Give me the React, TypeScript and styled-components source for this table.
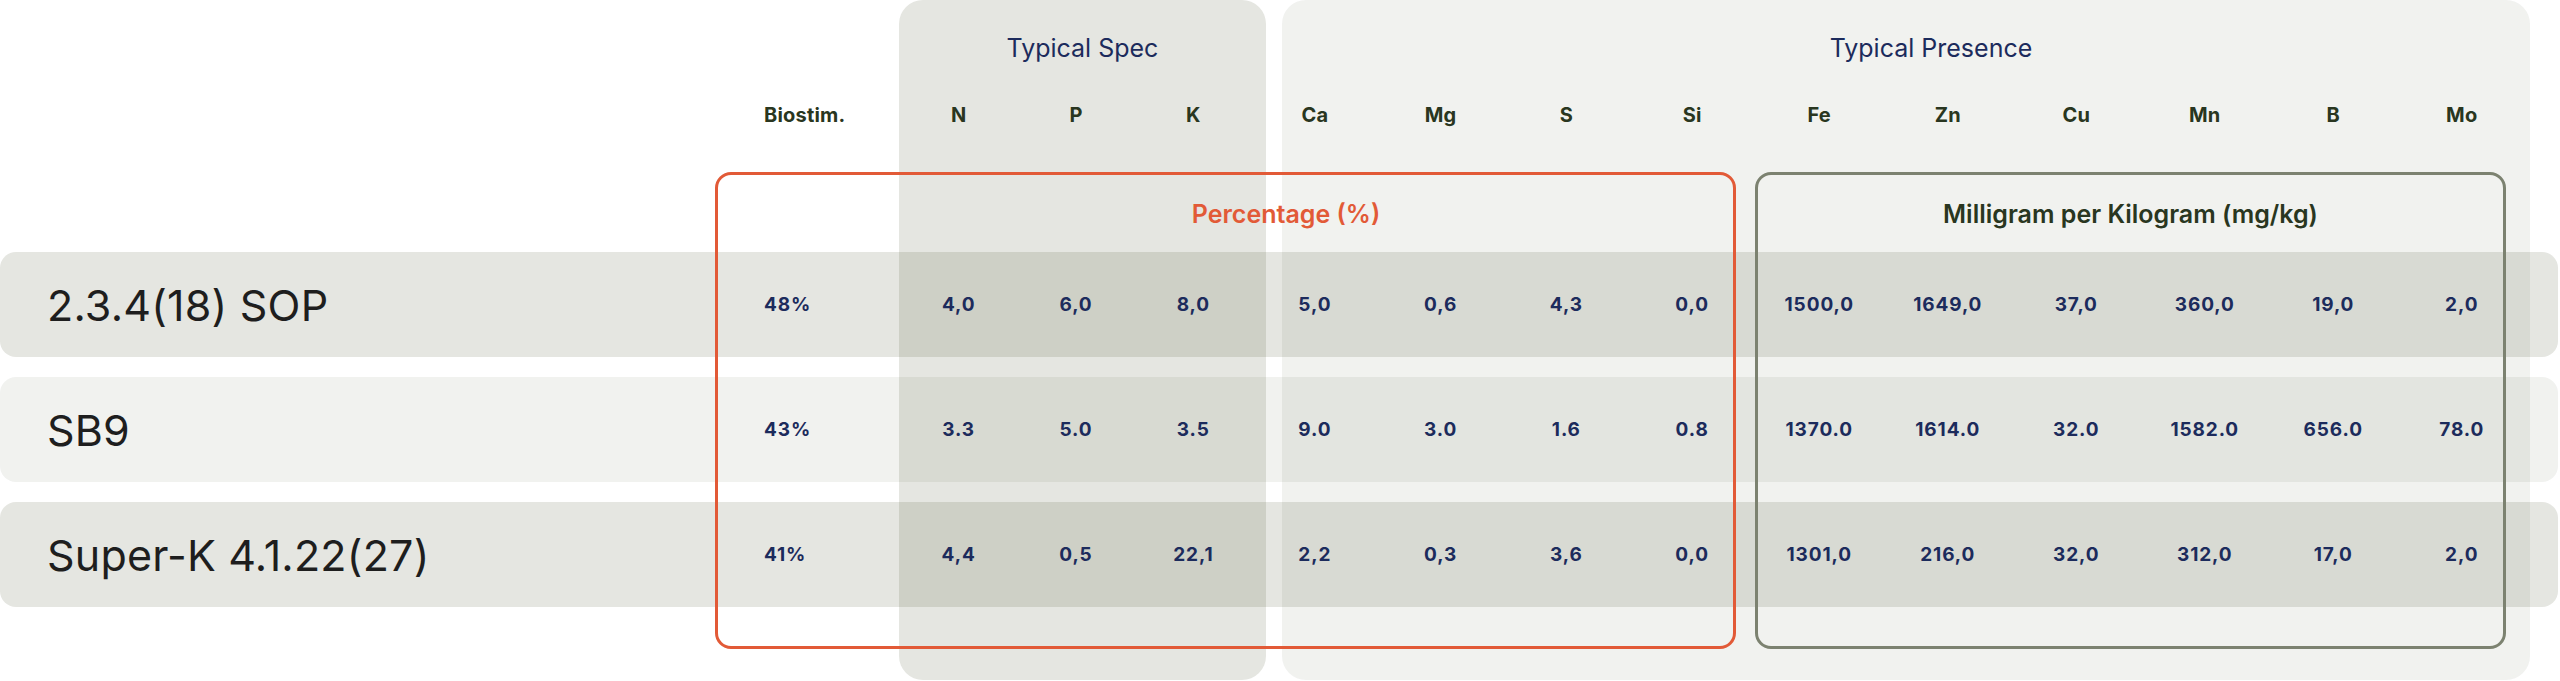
import React from "react";
import styled, { createGlobalStyle } from "styled-components";

const GlobalStyle = createGlobalStyle`
  html, body {
    margin: 0;
    padding: 0;
    background: #ffffff;
  }
  body {
    font-family: Inter, "Noto Sans", Arial, sans-serif;
  }
`;

const NAVY = "#1c2b5c";
const OLIVE_TEXT = "#293620";
const ORANGE = "#e25a37";
const SAGE = "#7c8270";
const TINT = "38, 47, 5";

type Tone = "strong" | "soft";
const alpha = (t: Tone) => (t === "strong" ? 0.12 : 0.064);

const Table = styled.div`
  display: grid;
  width: 2560px;
  height: 681px;
  grid-template-columns:
    764px 136px repeat(3, 117.333px) repeat(4, 125.75px)
    repeat(6, 128.5px) 32px 2px;
  grid-template-rows: 90px 50px 32px 80px 105px 20px 105px 20px 105px 42px 31px 1px;
  overflow: hidden;
`;

const Band = styled.div<{ $tone: Tone; $cols: string; $inset: string; $shift: number }>`
  grid-row: 1 / 12;
  grid-column: ${(p) => p.$cols};
  margin: ${(p) => p.$inset};
  background: rgba(${TINT}, ${(p) => alpha(p.$tone)});
  border-radius: 24px;
  display: flex;
  justify-content: center;
  align-items: flex-start;
  padding-top: 32px;
  padding-left: ${(p) => p.$shift}px;
  box-sizing: border-box;
`;

const BandTitle = styled.span`
  font-size: 25px;
  line-height: 32px;
  font-weight: 400;
  color: ${NAVY};
  white-space: nowrap;
`;

const HeaderRow = styled.div`
  grid-row: 2;
  grid-column: 1 / 17;
  display: grid;
  grid-template-columns: subgrid;
  align-items: center;
`;

const HeadLabel = styled.span<{ $start?: boolean }>`
  justify-self: ${(p) => (p.$start ? "start" : "center")};
  font-size: 20px;
  line-height: 24px;
  font-weight: 700;
  letter-spacing: 0.2px;
  color: ${OLIVE_TEXT};
  white-space: nowrap;
`;

const Row = styled.div<{ $tone: Tone; $row: number }>`
  grid-row: ${(p) => p.$row};
  grid-column: 1 / 17;
  display: grid;
  grid-template-columns: subgrid;
  align-items: center;
  background: rgba(${TINT}, ${(p) => alpha(p.$tone)});
  border-radius: 16px;
`;

const Name = styled.span`
  padding-left: 47px;
  font-size: 43px;
  line-height: 50px;
  font-weight: 400;
  letter-spacing: 0.2px;
  color: #1e1e1e;
  white-space: nowrap;
`;

const Value = styled.span<{ $start?: boolean }>`
  justify-self: ${(p) => (p.$start ? "start" : "center")};
  font-size: 19px;
  line-height: 24px;
  font-weight: 700;
  letter-spacing: 0.9px;
  color: ${NAVY};
  white-space: nowrap;
`;

const Box = styled.div<{ $color: string; $cols: string; $inset: string; $shift: number }>`
  grid-row: 4 / 11;
  grid-column: ${(p) => p.$cols};
  margin: ${(p) => p.$inset};
  border: 3px solid ${(p) => p.$color};
  border-radius: 16px;
  display: flex;
  justify-content: center;
  align-items: flex-start;
  padding-top: 24px;
  padding-left: ${(p) => p.$shift}px;
  box-sizing: border-box;
`;

const BoxTitle = styled.span<{ $color: string }>`
  font-size: 25px;
  line-height: 30px;
  font-weight: 600;
  color: ${(p) => p.$color};
  white-space: nowrap;
`;

const headers = ["Biostim.", "N", "P", "K", "Ca", "Mg", "S", "Si", "Fe", "Zn", "Cu", "Mn", "B", "Mo"];

const products: { name: string; tone: Tone; values: string[] }[] = [
  {
    name: "2.3.4(18) SOP",
    tone: "strong",
    values: ["48%", "4,0", "6,0", "8,0", "5,0", "0,6", "4,3", "0,0", "1500,0", "1649,0", "37,0", "360,0", "19,0", "2,0"],
  },
  {
    name: "SB9",
    tone: "soft",
    values: ["43%", "3.3", "5.0", "3.5", "9.0", "3.0", "1.6", "0.8", "1370.0", "1614.0", "32.0", "1582.0", "656.0", "78.0"],
  },
  {
    name: "Super-K 4.1.22(27)",
    tone: "strong",
    values: ["41%", "4,4", "0,5", "22,1", "2,2", "0,3", "3,6", "0,0", "1301,0", "216,0", "32,0", "312,0", "17,0", "2,0"],
  },
];

export default function App() {
  return (
    <>
      <GlobalStyle />
      <Table>
        <Band $tone="strong" $cols="3 / 6" $inset="0 -14px 0 -1px" $shift={0}>
          <BandTitle>Typical Spec</BandTitle>
        </Band>
        <Band $tone="soft" $cols="6 / 17" $inset="0 28px 0 30px" $shift={50}>
          <BandTitle>Typical Presence</BandTitle>
        </Band>

        <HeaderRow>
          <span />
          {headers.map((h, i) => (
            <HeadLabel key={h} $start={i === 0}>
              {h}
            </HeadLabel>
          ))}
        </HeaderRow>

        {products.map((p, r) => (
          <Row key={p.name} $tone={p.tone} $row={5 + r * 2}>
            <Name>{p.name}</Name>
            {p.values.map((v, i) => (
              <Value key={i} $start={i === 0}>
                {v}
              </Value>
            ))}
          </Row>
        ))}

        <Box $color={ORANGE} $cols="1 / 10" $inset="0 19px 0 715px" $shift={121}>
          <BoxTitle $color={ORANGE}>Percentage (%)</BoxTitle>
        </Box>
        <Box $color={SAGE} $cols="10 / 17" $inset="0 52px 0 0" $shift={0}>
          <BoxTitle $color={OLIVE_TEXT}>Milligram per Kilogram (mg/kg)</BoxTitle>
        </Box>
      </Table>
    </>
  );
}
